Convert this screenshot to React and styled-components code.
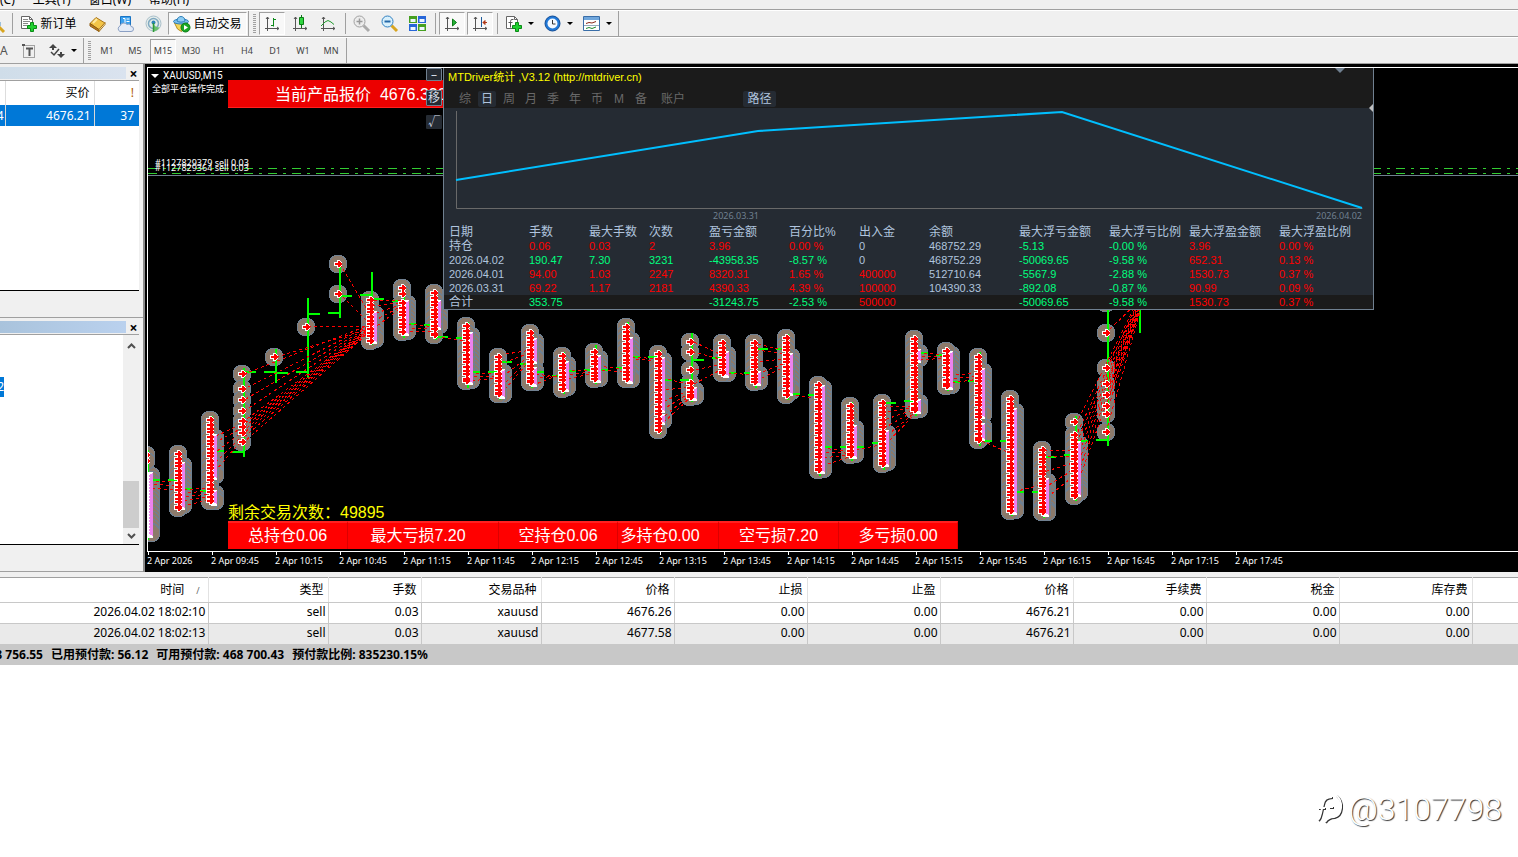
import React from "react";
import styled, { createGlobalStyle, css } from "styled-components";

const UI = `"Noto Sans", "Noto Sans CJK SC", sans-serif`;
const ARIAL = `"Liberation Sans", "Noto Sans CJK SC", sans-serif`;

const MENU = ["(C)", "工具(T)", "窗口(W)", "帮助(H)"];
const PERIODS = ["M1", "M5", "M15", "M30", "H1", "H4", "D1", "W1", "MN"];

const TIMES = [
  "2026", "09:45", "10:15", "10:45", "11:15", "11:45", "12:15", "12:45", "13:15",
  "13:45", "14:15", "14:45", "15:15", "15:45", "16:15", "16:45", "17:15", "17:45",
];

const SUMMARY = [
  { text: "总持仓0.06", width: 120 },
  { text: "最大亏损7.20", width: 151, end: 10 },
  { text: "空持仓0.06", width: 119 },
  { text: "多持仓0.00", width: 101, end: 16 },
  { text: "空亏损7.20", width: 120 },
  { text: "多亏损0.00", width: 119 },
];

const STAT_COLS = [
  ["日期", 81], ["手数", 60], ["最大手数", 60], ["次数", 60], ["盈亏金额", 80], ["百分比%", 70],
  ["出入金", 70], ["余额", 90], ["最大浮亏金额", 90], ["最大浮亏比例", 80], ["最大浮盈金额", 90], ["最大浮盈比例"],
];

// each value starts with its tone: r = red, g = green, n = neutral
const STAT_ROWS = [
  ["n持仓", "r0.06", "r0.03", "r2", "r3.96", "r0.00 %", "n0", "n468752.29", "g-5.13", "g-0.00 %", "r3.96", "r0.00 %"],
  ["n2026.04.02", "g190.47", "g7.30", "g3231", "g-43958.35", "g-8.57 %", "n0", "n468752.29", "g-50069.65", "g-9.58 %", "r652.31", "r0.13 %"],
  ["n2026.04.01", "r94.00", "r1.03", "r2247", "r8320.31", "r1.65 %", "r400000", "n512710.64", "g-5567.9", "g-2.88 %", "r1530.73", "r0.37 %"],
  ["n2026.03.31", "r69.22", "r1.17", "r2181", "r4390.33", "r4.39 %", "r100000", "n104390.33", "g-892.08", "g-0.87 %", "r90.99", "r0.09 %"],
];
const STAT_TOTAL = ["n合计", "g353.75", "n", "n", "g-31243.75", "g-2.53 %", "r500000", "n", "g-50069.65", "g-9.58 %", "r1530.73", "r0.37 %"];

const TRADE_COLS = [
  ["时间", 208], ["类型", 120], ["手数", 93], ["交易品种", 120], ["价格", 133], ["止损", 133],
  ["止盈", 133], ["价格", 133], ["手续费", 133], ["税金", 133], ["库存费", 133],
];
const TRADES = [
  ["2026.04.02 18:02:10", "sell", "0.03", "xauusd", "4676.26", "0.00", "0.00", "4676.21", "0.00", "0.00", "0.00"],
  ["2026.04.02 18:02:13", "sell", "0.03", "xauusd", "4677.58", "0.00", "0.00", "4676.21", "0.00", "0.00", "0.00"],
];

// x, entries (single marks or [from, to] runs), exits
const CLUSTERS = [
  [146, [455, 461], [[476, 533]]],
  [178, [[454, 508]], [[466, 505]]],
  [210, [[420, 501]], [[438, 475], [494, 501]]],
  [242, [374, 389, 400, 411, 421, 427, 433, 442], []],
  [274, [357], []],
  [306, [327], []],
  [338, [264, 294], []],
  [370, [[300, 341]], [[315, 339]]],
  [402, [288, 294, [303, 332]], [[304, 331]]],
  [434, [[293, 335]], [[304, 325]]],
  [466, [[326, 381]], [[336, 380]]],
  [498, [[357, 394]], [[373, 394]]],
  [530, [[333, 382]], [[342, 359], [371, 382]]],
  [562, [[356, 389]], [[365, 387]]],
  [594, [[352, 379]], [[359, 378]]],
  [626, [[327, 379]], [[341, 379]]],
  [658, [[354, 430]], [[361, 408], [418, 420]]],
  [690, [342, 352, 370, [383, 397]], [[391, 396]]],
  [722, [[343, 373]], [[355, 373]]],
  [754, [[343, 382]], [[375, 381]]],
  [786, [[338, 395]], [[357, 391]]],
  [818, [[385, 470]], [[389, 469]]],
  [850, [[406, 455]], [[429, 454]]],
  [882, [[403, 464]], [[434, 462]]],
  [914, [[339, 410]], [[353, 358], [403, 409]]],
  [946, [[351, 386]], [[355, 385]]],
  [978, [[357, 440]], [[372, 414], [427, 436]]],
  [1010, [[399, 511]], [[412, 510]]],
  [1042, [[450, 512]], [[482, 512]]],
  [1074, [422, [435, 496]], [[445, 492]]],
  [1106, [303, 333, 368, 384, 395, 406, 414, 432], []],
];

// x, high, low, open, close
const BARS = [
  [148, 450, 540, null, 480], [180, 452, 511, 480, 489], [212, 416, 506, 491, 451],
  [244, 368, 457, 452, 372], [276, 349, 383, 372, 373], [308, 298, 378, 372, 314],
  [340, 264, 318, 313, 296], [372, 272, 345, 295, 299], [404, 286, 338, 301, 324],
  [436, 290, 340, 325, 337], [468, 322, 388, 338, 372], [500, 354, 400, 372, 362],
  [532, 330, 388, 364, 372], [564, 352, 394, 376, 371], [596, 345, 384, 370, 370],
  [628, 322, 384, 368, 357], [660, 350, 434, 357, 380], [692, 333, 402, 380, 360],
  [724, 340, 378, 358, 373], [756, 340, 388, 373, 349], [788, 334, 400, 349, 394],
  [820, 382, 476, 395, 447], [852, 402, 461, 447, 447], [884, 400, 470, 443, 403],
  [916, 336, 416, 401, 353], [948, 348, 391, 355, 382], [980, 352, 446, 381, 441],
  [1012, 396, 516, 441, 492], [1044, 447, 518, 492, 457], [1076, 416, 501, 455, 441],
  [1108, 300, 446, 440, null], [1140, 300, 333, null, null],
];

// order links: start x, start ys, end x, end y range
const LINKS = [
  [150, [481, 484, 488], 176, 482, 490],
  [184, [490, 493, 497, 501, 506], 208, 488, 500],
  [216, [436, 442, 452, 462, 470], 242, 424, 440],
  [244, [374, 389, 400, 411, 421, 424, 427, 430, 433, 437, 442], 372, 324, 330],
  [276, [357], 372, 328, 328],
  [308, [327], 372, 326, 326],
  [340, [264, 294], 372, 318, 326],
  [374, [300, 306, 314, 321, 328], 404, 301, 306],
  [408, [324, 328, 332], 436, 327, 331],
  [442, [337], 468, 342, 345],
  [470, [373, 377, 381], 498, 374, 378],
  [506, [354, 362, 374, 382, 388], 532, 350, 358],
  [536, [374, 378, 384], 564, 378, 373],
  [566, [371, 375, 379], 596, 370, 373],
  [598, [366, 370], 628, 370, 372],
  [632, [357, 359], 660, 359, 361],
  [662, [378, 390, 402, 410, 418, 424], 692, 385, 396],
  [694, [342, 352, 370, 384], 724, 356, 368],
  [728, [373], 756, 375, 377],
  [758, [344, 350, 362, 374, 380], 790, 352, 364],
  [790, [394], 820, 399, 399],
  [822, [448, 452, 458, 466], 852, 452, 456],
  [856, [450], 884, 444, 446],
  [884, [406, 412, 420, 428, 438, 446], 916, 406, 413],
  [918, [353, 356, 360], 948, 355, 358],
  [950, [375, 379, 383], 980, 373, 379],
  [982, [441], 1012, 454, 454],
  [1014, [492], 1044, 484, 486],
  [1044, [450, 456, 472, 488, 500], 1076, 450, 474],
  [1076, [424, 436, 444, 452, 460, 468, 478, 488], 1138, 300, 316],
  [1106, [333, 368, 384, 395, 406, 414, 432], 1140, 300, 312],
];

// fills each [from, to] run with marks, the steps taken in turn
const spread = (runs, ...steps) =>
  runs.flatMap((run) => {
    if (!Array.isArray(run)) return [run];
    const list = [];
    for (let y = run[0]; y < run[1]; y += steps[list.length % steps.length]) list.push(y);
    list.push(run[1]);
    return [...new Set(list)];
  });

function PriceChart() {
  return (
    <Plot aria-label="XAUUSD M15">
      <g transform="translate(-148 -68)" shapeRendering="crispEdges">
        <path d="M148 168.500H4000M148 173.500H4000" stroke="#32cd32" strokeDasharray="9 6 3 6" />
        <path d="M148 175.500H4000" stroke="#708090" />
        {CLUSTERS.map(([x, entries, exits]) => (
          <g key={x} fill="#8c7a6b" stroke="#708090">
            {spread(exits, 4).map((y) => (
              <circle key={y} cx={x + 5} cy={y} r="9" />
            ))}
            {spread(entries, 5, 7).map((y) => (
              <circle key={y} cx={x} cy={y} r="9" />
            ))}
          </g>
        ))}
        {BARS.map(([x, high, low, open, close]) => (
          <path
            key={x}
            d={`M${x} ${high}V${low}${open ? `M${x - 12} ${open}H${x}` : ""}${close ? `M${x} ${close}H${x + 12}` : ""}`}
            stroke="#00ff00"
            strokeWidth="2"
          />
        ))}
        {LINKS.map(([x1, ys, x2, from, to]) =>
          ys.map((y, i) => (
            <line
              key={`${x1}-${y}`}
              x1={x1}
              y1={y}
              x2={x2}
              y2={from + ((to - from) * i) / Math.max(1, ys.length - 1)}
              stroke="#ff0000"
              strokeDasharray="3 3"
              strokeDashoffset={i * 2}
            />
          ))
        )}
        {CLUSTERS.map(([x, entries, exits]) => (
          <g key={x}>
            {exits.map(([a, b]) => (
              <rect key={a} x={x + 1} y={a - 4} width="6" height={b - a + 9} fill="#fff" />
            ))}
            {spread(exits, 3).map((y) => (
              <path key={y} d={`M${x + 6} ${y - 2}v4l-3 -2z`} fill="#ee82ee" stroke="#ee82ee" />
            ))}
            {spread(entries, 3, 5, 4).map((y) => (
              <path key={y} d={`M${x - 4} ${y - 2}h3v-2h2l3 3v2l-3 3h-2v-2h-3z`} fill="#fff" />
            ))}
            {spread(entries, 3, 5, 4).map((y) => (
              <path key={y} d={`M${x - 3} ${y - 1}h3v-2h1l3 3l-3 3h-1v-2h-3z`} fill="#ff0000" />
            ))}
          </g>
        ))}
      </g>
    </Plot>
  );
}

function Axes() {
  return (
    <path
      d="M4.500 2v14M2 13.500h14M3 4l1.500-2l1.500 2M14 12l2 1.500l-2 1.500"
      fill="none"
      stroke="#555"
    />
  );
}

function Doc() {
  return (
    <>
      <path d="M1.500 1.500h8l3 3v9h-11z" fill="#fff" stroke="#666" />
      <path d="M9.500 1.500v3h3" fill="none" stroke="#666" />
    </>
  );
}

const Plus = () => <path d="M10.500 7.500h3v3h3v3h-3v3h-3v-3h-3v-3h3z" fill="#1fd02f" stroke="#0a8a16" />;

const ICONS = {
  order: (
    <>
      <Doc />
      <path d="M3 4.500h5M3 6.500h7M3 8.500h5M3 10.500h4" stroke="#888" />
      <Plus />
    </>
  ),
  book: (
    <>
      <path d="M1 8.500l6-6l9 5.500l-6 7z" fill="#f3c548" stroke="#a8741a" />
      <path d="M1 8.500v2.500l9 5.500v-2z" fill="#b77a1c" stroke="#8d5a12" />
      <path d="M10 16.500l6-7v-2l-6 7z" fill="#fff4c8" stroke="#a8741a" />
      <path d="M4 8l4-4" stroke="#ffe9a0" strokeWidth="2" />
    </>
  ),
  cloud: (
    <>
      <path d="M3.500 1.500h10v9h-10z" fill="#3aa0ee" stroke="#1a74c4" />
      <path d="M6 3.500h2v5M9.500 4h3M9.500 6.500h3" fill="none" stroke="#fff" />
      <path d="M3 16.500a3 3 0 0 1 0-5.500a4 4 0 0 1 7-1.500a3 3 0 0 1 4 2a2.500 2.500 0 0 1 0 5z" fill="#e4ebf6" stroke="#8ba0c4" />
    </>
  ),
  radio: (
    <>
      <circle cx="8.500" cy="8.500" r="7.500" fill="#e4ecea" stroke="#a9bfca" />
      <circle cx="8.500" cy="8.500" r="5" fill="none" stroke="#7fa8c0" strokeWidth="1.500" />
      <path d="M8.500 9v7.500a8 8 0 0 0 6-4q-4 0-6-3.500z" fill="#6cc070" />
      <circle cx="8.500" cy="7.500" r="2" fill="#2c84b8" />
      <path d="M8.500 8v9" stroke="#2f9a38" strokeWidth="1.500" />
    </>
  ),
  auto: (
    <>
      <path d="M1.500 8l3 6l4 2.500l6-8.500z" fill="#f4d659" stroke="#b98c1c" />
      <ellipse cx="8" cy="6.500" rx="7.500" ry="2.500" fill="#7cc0ee" stroke="#2d7fb8" />
      <path d="M4 6c0-6 8-6 8 0c-2 1.500-6 1.500-8 0z" fill="#8dcdf4" stroke="#2d7fb8" />
      <circle cx="12.500" cy="12.500" r="4.500" fill="#18a824" stroke="#0d7c18" />
      <path d="M11 10v5l4-2.500z" fill="#fff" />
    </>
  ),
  bars: (
    <>
      <Axes />
      <path d="M10.500 3v8.500M8 10.500h2.500M10.500 4.500h2.500" stroke="#0c8a1a" fill="none" />
    </>
  ),
  candles: (
    <>
      <Axes />
      <path d="M10.500 0v13" stroke="#0c7a16" />
      <path d="M8.500 2.500h4v7h-4z" fill="#2fd640" stroke="#0c7a16" />
    </>
  ),
  line: (
    <>
      <Axes />
      <path d="M2 11l4-4q3-3 6 0l3 2.500" stroke="#1f9a2c" fill="none" />
    </>
  ),
  zoomIn: (
    <>
      <path d="M10.500 10.500l5.500 5.500" stroke="#aaa" strokeWidth="3" />
      <circle cx="6.500" cy="6.500" r="5.500" fill="#ececec" stroke="#a0a0a0" />
      <path d="M3.500 6.500h6M6.500 3.500v6" stroke="#999" strokeWidth="1.500" />
    </>
  ),
  zoomOut: (
    <>
      <path d="M10.500 10.500l5.500 5.500" stroke="#d8a520" strokeWidth="3" />
      <circle cx="6.500" cy="6.500" r="5.500" fill="#d8f0fc" stroke="#2f7fc0" />
      <path d="M3.500 6.500h6" stroke="#2468a8" strokeWidth="2" />
    </>
  ),
  tiles: (
    <>
      <path d="M0 1h8v7H0zM9 9h8v7H9z" fill="#46a020" />
      <path d="M9 1h8v7H9zM0 9h8v7H0z" fill="#2766d8" />
      <path d="M1.500 4h5v3h-5zM10.500 4h5v3h-5zM1.500 12h5v3h-5zM10.500 12h5v3h-5z" fill="#eef6ff" />
    </>
  ),
  scroll: (
    <>
      <Axes />
      <path d="M9.500 4v7l4-3.500z" fill="#25b236" stroke="#0c7a16" />
    </>
  ),
  shift: (
    <>
      <Axes />
      <path d="M10.500 2v10" stroke="#1d5a9a" />
      <path d="M12 7.500h4M14 5.500l-2 2l2 2z" stroke="#b03818" fill="#b03818" />
    </>
  ),
  indicator: (
    <>
      <Doc />
      <path d="M8.500 4.500q-3-1-3 2v6M3.500 7.500h4" fill="none" stroke="#555" />
      <Plus />
    </>
  ),
  clock: (
    <>
      <circle cx="8.500" cy="8.500" r="7.500" fill="#1f78d8" stroke="#134c94" />
      <circle cx="8.500" cy="8.500" r="5" fill="#f2f8ff" />
      <path d="M8.500 5v4h3" fill="none" stroke="#333" />
    </>
  ),
  template: (
    <>
      <path d="M0.500 1.500h16v14h-16z" fill="#fff" stroke="#3a6ea8" />
      <path d="M1 2h15v3H1z" fill="#6fa6dc" />
      <path d="M3 8.500l3-1l3 .500l4-1.500" stroke="#8a2818" fill="none" />
      <path d="M1 10.500h15" stroke="#9ab" />
      <path d="M3 13.500l3-1l3 1l4-1.500" stroke="#1f8a2c" fill="none" />
    </>
  ),
  label: (
    <>
      <path d="M3.500 3.500h11v12h-11z" fill="none" stroke="#555" strokeDasharray="1 1" />
      <path d="M2 2h3v2h-3z" fill="#555" />
      <path d="M6 6.500h7M9.500 6v8" stroke="#555" strokeWidth="2" />
    </>
  ),
  shapes: (
    <>
      <path d="M5 2l4 4h-3v2h-2v-2h-3zM13 16l-4-4h3v-2h2v2h3z" fill="#444" />
      <path d="M3 10l3 3l5-6" fill="none" stroke="#444" strokeWidth="1.500" />
    </>
  ),
};

function Icon({ name }) {
  return (
    <svg width="18" height="18" viewBox="0 0 18 18" aria-hidden="true">
      {ICONS[name]}
    </svg>
  );
}

function App() {
  return (
    <Page>
      <GlobalStyle />
      <MenuBar>
        {MENU.map((item) => (
          <MenuItem key={item}>{item}</MenuItem>
        ))}
      </MenuBar>

      <Toolbar>
        <ToolGroup>
          <Clipped $width={12}>
            <svg width="12" height="24" viewBox="0 0 12 24" aria-hidden="true">
              <path d="M-3 7l3 3v4" fill="none" stroke="#4a90c8" />
              <path d="M-1 15l5 5" stroke="#d8a520" strokeWidth="3" />
            </svg>
          </Clipped>
          <Separator $tight />
          <TextTool $width={71}>
            <Icon name="order" />
            新订单
          </TextTool>
          <Tool aria-label="市场报价"><Icon name="book" /></Tool>
          <Tool aria-label="云端"><Icon name="cloud" /></Tool>
          <Tool aria-label="信号"><Icon name="radio" /></Tool>
          <TextTool $width={79} $pressed>
            <Icon name="auto" />
            自动交易
          </TextTool>
        </ToolGroup>
        <ToolGroup>
          <Grip />
          <Tool aria-label="柱状图" $pressed><Icon name="bars" /></Tool>
          <Tool aria-label="阴阳烛"><Icon name="candles" /></Tool>
          <Tool aria-label="折线图"><Icon name="line" /></Tool>
          <Separator />
          <Tool aria-label="放大"><Icon name="zoomIn" /></Tool>
          <Tool aria-label="缩小"><Icon name="zoomOut" /></Tool>
          <Tool aria-label="平铺"><Icon name="tiles" /></Tool>
          <Separator />
          <Tool aria-label="自动滚动" $pressed><Icon name="scroll" /></Tool>
          <Tool aria-label="图表平移" $pressed><Icon name="shift" /></Tool>
          <Separator />
          <DropTool aria-label="指标"><Icon name="indicator" /><Caret /></DropTool>
          <DropTool aria-label="周期"><Icon name="clock" /><Caret /></DropTool>
          <DropTool aria-label="模板"><Icon name="template" /><Caret /></DropTool>
        </ToolGroup>
      </Toolbar>

      <Toolbar>
        <ToolGroup>
          <Clipped $width={15}>A</Clipped>
          <Tool aria-label="文本标签"><Icon name="label" /></Tool>
          <DropTool aria-label="箭头"><Icon name="shapes" /><Caret /></DropTool>
        </ToolGroup>
        <ToolGroup>
          <Grip />
          {PERIODS.map((p) => (
            <Tool key={p} $pressed={p === "M15"}>{p}</Tool>
          ))}
        </ToolGroup>
      </Toolbar>

      <Workspace>
        <Sidebar>
          <Dock>
            <DockTitle $from="#cfdde9" $to="#dae3ef">
              <CloseButton aria-label="关闭">×</CloseButton>
            </DockTitle>
            <Quotes>
              <colgroup>
                <col style={{ width: 5 }} />
                <col style={{ width: 89 }} />
                <col />
              </colgroup>
              <thead>
                <tr><th /><th>买价</th><th>!</th></tr>
              </thead>
              <tbody>
                <tr><td>4</td><td>4676.21</td><td>37</td></tr>
              </tbody>
            </Quotes>
            <DockSpace />
          </Dock>
          <Dock>
            <DockTitle $from="#a9c3dc" $to="#bad1ee">
              <CloseButton aria-label="关闭">×</CloseButton>
            </DockTitle>
            <Navigator>
              <Selected>2</Selected>
              <ScrollTrack>
                <svg width="9" height="6" viewBox="0 0 9 6"><path d="M1 5l3.500-3.500l3.500 3.500" fill="none" stroke="#505050" strokeWidth="2" /></svg>
                <ScrollThumb />
                <svg width="9" height="6" viewBox="0 0 9 6"><path d="M1 1l3.500 3.500l3.500-3.500" fill="none" stroke="#505050" strokeWidth="2" /></svg>
              </ScrollTrack>
            </Navigator>
          </Dock>
        </Sidebar>

        <ChartWindow>
          <PlotArea>
            <PriceChart />
            <SymbolLabel>XAUUSD,M15</SymbolLabel>
            <DoneLabel>全部平仓操作完成.</DoneLabel>
            <OrderLabel $top={89}>#1127829379 sell 0.03</OrderLabel>
            <OrderLabel $top={94}>#1127829364 sell 0.03</OrderLabel>
            <QuoteBanner>当前产品报价&nbsp; 4676.330</QuoteBanner>
            <SideKeys>
              <SideKey $height={13} $outlined aria-label="最小化">–</SideKey>
              <SideKey $height={16} $outlined>移</SideKey>
              <SideKey $height={14}>√</SideKey>
            </SideKeys>
            <Footer>
              <Remaining>剩余交易次数：49895</Remaining>
              <SummaryBar>
                {SUMMARY.map((s) => (
                  <SummaryButton key={s.text} $width={s.width} $end={s.end || 0}>{s.text}</SummaryButton>
                ))}
              </SummaryBar>
            </Footer>
            <StatsPanel>
              <StatsHead>
                <StatsTitle>MTDriver统计 ,V3.12 (http://mtdriver.cn)</StatsTitle>
                <StatsTabs>
                  {["综", "日", "周", "月", "季", "年", "币", "M", "备", "账户"].map((t) => (
                    <StatsTab key={t} $active={t === "日"} $wide={t === "账户"}>{t}</StatsTab>
                  ))}
                  <PathButton>路径</PathButton>
                </StatsTabs>
              </StatsHead>
              <Balance width="929" height="101">
                <path d="M12.500 3v97.500h906" fill="none" stroke="#696969" />
                <path d="M12 72L314 23L618 4L918 100" fill="none" stroke="#00bfff" strokeWidth="2" />
              </Balance>
              <BalanceDates>
                <span>2026.03.31</span>
                <span>2026.04.02</span>
              </BalanceDates>
              <StatsTable>
                <colgroup>
                  {STAT_COLS.map(([name, width]) => (
                    <col key={name} style={{ width }} />
                  ))}
                </colgroup>
                <thead>
                  <tr>{STAT_COLS.map(([name]) => <th key={name}>{name}</th>)}</tr>
                </thead>
                <tbody>
                  {STAT_ROWS.map((row, r) => (
                    <tr key={r}>
                      {row.map((v, i) => <Value key={i} $tone={v[0]}>{v.slice(1)}</Value>)}
                    </tr>
                  ))}
                </tbody>
                <tfoot>
                  <tr>
                    {STAT_TOTAL.map((v, i) => <Value key={i} $tone={v[0]}>{v.slice(1)}</Value>)}
                  </tr>
                </tfoot>
              </StatsTable>
              <ShiftMark />
              <EdgeMark />
            </StatsPanel>
          </PlotArea>
          <TimeAxis>
            {TIMES.map((t) => (
              <Tick key={t}>2 Apr {t}</Tick>
            ))}
          </TimeAxis>
        </ChartWindow>
      </Workspace>

      <Terminal>
        <Trades>
          <colgroup>
            {TRADE_COLS.map(([, width], i) => (
              <col key={i} style={{ width }} />
            ))}
            <col />
          </colgroup>
          <thead>
            <tr>
              {TRADE_COLS.map(([name], i) => (
                <th key={i}>
                  {name}
                  {i === 0 && <Sort>/</Sort>}
                </th>
              ))}
              <th />
            </tr>
          </thead>
          <tbody>
            {TRADES.map((row) => (
              <tr key={row[0]}>
                {row.map((v, i) => <td key={i}>{v}</td>)}
                <td />
              </tr>
            ))}
          </tbody>
        </Trades>
        <Status>
          <span>8 756.55</span>
          <span>已用预付款: 56.12</span>
          <span>可用预付款: 468 700.43</span>
          <span>预付款比例: 835230.15%</span>
        </Status>
      </Terminal>

      <Watermark>
        <svg width="32" height="34" viewBox="0 0 32 34" fill="none" aria-hidden="true">
          <path d="M6 29q2-2 3-7l2-9q1-7 9-7M6 17h7M17 16h4M24 4q6 5 5 13t-7 9q-6 0-9 5" stroke="#333" strokeWidth="2" />
          <path d="M5 28q2-2 3-7l2-9q1-7 9-7M5 16h7M16 15h4M23 3q6 5 5 13t-7 9q-6 0-9 5" stroke="#fff" strokeWidth="2" />
        </svg>
        @3107798
      </Watermark>
    </Page>
  );
}

export default App;

const GlobalStyle = createGlobalStyle`
  * {
    box-sizing: border-box;
  }

  body {
    margin: 0;
    background: #fff;
    font-family: ${UI};
    font-size: 12px;
    color: #000;
  }

  button {
    border: 0;
    padding: 0;
    margin: 0;
    background: none;
    font: inherit;
    color: inherit;
  }

  table {
    border-collapse: collapse;
    table-layout: fixed;
    width: 100%;
  }

  th,
  td {
    padding: 0;
    font-weight: normal;
    white-space: nowrap;
  }
`;

const Page = styled.div`
  min-height: 100vh;
  display: flex;
  flex-direction: column;
  overflow: hidden;
`;

const MenuBar = styled.nav`
  height: 10px;
  display: flex;
  align-items: flex-end;
  gap: 18px;
  overflow: hidden;
  background: #f0f0f0;
  border-bottom: 1px solid #a0a0a0;
`;

const MenuItem = styled.button`
  line-height: 16px;
  padding-bottom: 1px;
`;

const Toolbar = styled.div`
  height: 27px;
  display: flex;
  background: #f0f0f0;
  border-top: 1px solid #fff;
  border-bottom: 1px solid #a0a0a0;
`;

const ToolGroup = styled.div`
  display: flex;
  align-items: center;
  border-right: 1px solid #a0a0a0;
  padding-right: 1px;
`;

const Clipped = styled.div`
  width: ${(p) => p.$width}px;
  height: 24px;
  line-height: 24px;
  color: #555;
  overflow: hidden;
`;

const Separator = styled.div`
  width: 1px;
  height: 21px;
  margin: ${(p) => (p.$tight ? "0" : "0 2px 0 3px")};
  background: #a0a0a0;
`;

const Grip = styled.div`
  width: 3px;
  height: 20px;
  margin: 0 2px 0 4px;
  background: repeating-linear-gradient(#a0a0a0 0 1px, #f0f0f0 1px 2px);
`;

const pressed = css`
  border: 1px solid #fff;
  border-top-color: #a0a0a0;
  border-left-color: #a0a0a0;
  background: #f8f8f8;
`;

const Tool = styled.button`
  width: 26px;
  height: 23px;
  margin: 0 1px;
  display: flex;
  align-items: center;
  justify-content: center;
  font-size: 9px;
  color: #444;
  ${(p) => p.$pressed && pressed}
`;

const TextTool = styled(Tool)`
  width: ${(p) => p.$width}px;
  margin: 0;
  gap: 2px;
  font-size: 12px;
  line-height: 20px;
  color: #000;
`;

const DropTool = styled(Tool)`
  width: 37px;
  gap: 5px;
`;

const Caret = styled.span`
  border: 3px solid transparent;
  border-top-color: #000;
  border-bottom: 0;
`;

const Workspace = styled.main`
  display: flex;
  background: #f0f0f0;
`;

const Sidebar = styled.aside`
  flex: none;
  width: 145px;
  display: flex;
  flex-direction: column;
  border-right: 2px solid #8c8c8c;
`;

const Dock = styled.section`
  flex: 1;
  padding: 2px 4px 26px 0;
  display: flex;
  flex-direction: column;
  border-bottom: 1px solid #a0a0a0;
`;

const DockTitle = styled.div`
  height: 15px;
  padding-left: 126px;
  border-bottom: 1px solid #a0a0a0;
  background: linear-gradient(90deg, ${(p) => p.$from}, ${(p) => p.$to}) left / 126px 12px no-repeat;
`;

const CloseButton = styled.button`
  width: 13px;
  padding-left: 2px;
  font: bold 14px/12px ${UI};
`;

const Quotes = styled.table`
  background: #fff;

  th {
    height: 24px;
    padding-right: 4px;
    padding-bottom: 2px;
    text-align: right;
    border-right: 1px solid #ddd;
  }

  td {
    height: 21px;
    padding-right: 3px;
    text-align: right;
    color: #fff;
    background: #0078d7;
    border-right: 1px solid #d8d8d8;
  }

  th:first-child,
  td:first-child {
    padding-right: 1px;
    direction: rtl;
    overflow: hidden;
  }

  th:last-child,
  td:last-child {
    border-right: 0;
    padding-right: 5px;
  }

  th:last-child {
    color: #b05a00;
  }
`;

const DockSpace = styled.div`
  flex: 1;
  background: #fff;
  border-bottom: 1px solid #000;
`;

const Navigator = styled.div`
  flex: 1;
  display: flex;
  justify-content: space-between;
  background: #fff;
  border-bottom: 1px solid #000;
`;

const Selected = styled.div`
  width: 4px;
  height: 20px;
  margin-top: 42px;
  line-height: 20px;
  color: #fff;
  background: #0078d7;
  direction: rtl;
  overflow: hidden;
`;

const ScrollTrack = styled.div`
  width: 16px;
  padding: 8px 0 5px;
  display: flex;
  flex-direction: column;
  align-items: center;
  background: #f0f0f0;
`;

const ScrollThumb = styled.div`
  width: 100%;
  height: 47px;
  margin: auto 0 5px;
  background: #cdcdcd;
`;

const ChartWindow = styled.section`
  flex: 1;
  min-width: 0;
  padding: 3px 0 0 2px;
  background: #000;
`;

const PlotArea = styled.div`
  position: relative;
  overflow: hidden;
  border-top: 1px solid #fff;
  border-left: 1px solid #fff;
  border-bottom: 1px solid #fff;
`;

const Plot = styled.svg`
  display: block;
  width: 100%;
  height: 483px;
`;

const TimeAxis = styled.div`
  height: 20px;
  display: flex;
  overflow: hidden;
`;

const Tick = styled.div`
  flex: none;
  width: 64px;
  color: #fff;
  font-size: 9px;
  line-height: 12px;
  white-space: nowrap;

  &::before {
    content: "";
    display: block;
    width: 1px;
    height: 3px;
    margin-left: 1px;
    background: #fff;
  }
`;

const SymbolLabel = styled.div`
  position: absolute;
  top: 1px;
  left: 3px;
  display: flex;
  align-items: center;
  gap: 4px;
  color: #fff;
  font: 10px/14px Roboto, sans-serif;

  &::before {
    content: "";
    border: 4px solid transparent;
    border-top-color: #fff;
    border-bottom: 0;
  }
`;

const DoneLabel = styled.div`
  position: absolute;
  top: 15px;
  left: 4px;
  color: #fff;
  font: 9px/12px ${ARIAL};
`;

const OrderLabel = styled.div`
  position: absolute;
  top: ${(p) => p.$top}px;
  left: 7px;
  color: #fff;
  font-size: 9px;
  line-height: 12px;
`;

const QuoteBanner = styled.div`
  position: absolute;
  top: 12px;
  left: 80px;
  width: 240px;
  height: 28px;
  padding-left: 47px;
  color: #fff;
  font: 16px/30px ${ARIAL};
  white-space: nowrap;
  background: #ec0000;
  border-bottom: 1px solid #ff2020;
`;

const SideKeys = styled.div`
  position: absolute;
  top: 0;
  left: 278px;
  display: grid;
  gap: 9px;
`;

const SideKey = styled.button`
  width: 16px;
  height: ${(p) => p.$height}px;
  line-height: 12px;
  color: #d3dbe6;
  background: #252b33;
  border: ${(p) => (p.$outlined ? "1px solid #708090" : "0")};
  border-radius: 1px;
`;

const Footer = styled.div`
  position: absolute;
  left: 80px;
  bottom: 2px;
`;

const Remaining = styled.div`
  color: #ff0;
  font: 16px/16px ${ARIAL};
`;

const SummaryBar = styled.div`
  display: flex;
`;

const SummaryButton = styled.button`
  width: ${(p) => p.$width}px;
  height: 28px;
  padding-right: ${(p) => p.$end}px;
  color: #fff;
  font: 16px/26px ${ARIAL};
  white-space: nowrap;
  background: #f00;
  border-top: 2px solid #ff2020;
  border-right: 1px solid #dc0000;
`;

const StatsPanel = styled.section`
  position: absolute;
  top: 0;
  left: 295px;
  width: 931px;
  background: #252b33;
  border: 1px solid #708090;
  border-top: 0;
  color: #b0c4de;
  font-family: ${ARIAL};
`;

const StatsHead = styled.header`
  height: 40px;
  background: #1b1b1b;
`;

const StatsTitle = styled.div`
  height: 23px;
  padding-left: 4px;
  color: #ff0;
  font-size: 11px;
  line-height: 18px;
`;

const StatsTabs = styled.div`
  display: flex;
  padding-left: 10px;
`;

const StatsTab = styled.button`
  width: ${(p) => (p.$wide ? 38 : 18)}px;
  height: 16px;
  margin: 0 2px;
  line-height: 17px;
  color: ${(p) => (p.$active ? "#b0c4de" : "#696969")};
  background: ${(p) => (p.$active ? "#252b33" : "none")};
  border-radius: 2px;
`;

const PathButton = styled.button`
  width: 33px;
  height: 16px;
  margin-left: 49px;
  line-height: 17px;
  background: #252b33;
  border-radius: 2px;
`;

const Balance = styled.svg`
  display: block;
`;

const BalanceDates = styled.div`
  height: 16px;
  display: flex;
  color: #708090;
  font: 9px/13px ${UI};

  span {
    width: 315px;
    text-align: right;
  }

  span + span {
    width: 603px;
  }
`;

const StatsTable = styled.table`
  font-size: 11px;

  th,
  td {
    height: 14px;
    padding-left: 4px;
    line-height: 14px;
    text-align: left;
  }

  th:first-child,
  td:first-child {
    padding-left: 5px;
  }

  th,
  td:first-child {
    font-size: 12px;
  }

  tbody tr + tr td:first-child {
    font-size: 11px;
  }

  tfoot {
    background: #1b1b1b;
  }
`;

const TONES = { r: "#ff0000", g: "#00ff7f", n: "#b0c4de" };

const Value = styled.td`
  color: ${(p) => TONES[p.$tone]};
`;

const ShiftMark = styled.i`
  position: absolute;
  top: 0;
  right: 28px;
  border: 5px solid transparent;
  border-top-color: #708090;
  border-bottom: 0;
`;

const EdgeMark = styled.i`
  position: absolute;
  top: 36px;
  right: 0;
  border: 4px solid transparent;
  border-right-color: #c0c0c0;
  border-left: 0;
`;

const Terminal = styled.section`
  padding-top: 5px;
  background: #f0f0f0;
`;

const Trades = styled.table`
  background: #fff;
  border-top: 1px solid #a0a0a0;

  th,
  td {
    padding-bottom: 2px;
    text-align: right;
  }

  th {
    height: 25px;
    padding-right: 4px;
    border-right: 1px solid #e2e2e2;
    border-bottom: 1px solid #c8c8c8;
  }

  th:first-child {
    padding-right: 8px;
  }

  td {
    height: 21px;
    padding-right: 2px;
    line-height: 16px;
    border-right: 1px solid #c8c8c8;
    border-bottom: 1px solid #c8c8c8;
  }

  th:last-child,
  td:last-child {
    border-right: 0;
  }

  tbody tr:nth-child(even) {
    background: #eaeaea;
  }
`;

const Sort = styled.span`
  margin-left: 12px;
  font-size: 9px;
  color: #666;
`;

const Status = styled.div`
  height: 20px;
  display: flex;
  gap: 8px;
  font-weight: bold;
  line-height: 20px;
  white-space: nowrap;
  background: #c8c8c8;

  span:first-child {
    width: 43px;
    display: flex;
    justify-content: flex-end;
  }
`;

const Watermark = styled.div`
  margin: auto 16px 30px auto;
  display: flex;
  align-items: center;
  gap: 4px;
  color: #fff;
  font: 300 32px/36px Roboto, sans-serif;
  text-shadow: 1px 1px 1px #333;
`;
